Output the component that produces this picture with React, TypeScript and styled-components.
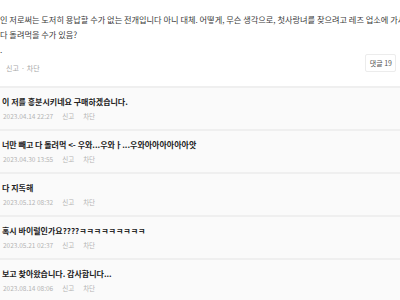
import React from "react";
import styled, { createGlobalStyle } from "styled-components";

const Global = createGlobalStyle`
  html, body { margin: 0; padding: 0; background: #ffffff; }
  body { width: 400px; height: 300px; overflow: hidden; font-family: "Noto Sans CJK KR", "Noto Sans", sans-serif; }
`;

const Page = styled.div`
  width: 400px;
  height: 300px;
  overflow: hidden;
  display: flex;
  flex-direction: column;
`;

const Post = styled.section`
  background: #ffffff;
  padding: 12px 4px 0 0;
  height: 88px;
  flex: none;
  box-sizing: border-box;
  display: flex;
  flex-direction: column;
  border-bottom: 2px solid #efefef;
`;

const PostText = styled.p`
  margin: 0;
  font-size: 8.2px;
  line-height: 15px;
  color: #3a3a3a;
  white-space: nowrap;
`;

const PostFooter = styled.div`
  display: flex;
  justify-content: space-between;
  align-items: flex-start;
  padding-left: 6px;
  margin-top: -3px;
`;

const Actions = styled.div`
  display: flex;
  align-items: center;
  gap: 2px;
  margin-top: 8px;
  font-size: 7px;
  color: #a8a8a8;
  line-height: 12px;
`;

const ReplyButton = styled.button`
  font-family: inherit;
  font-size: 7px;
  color: #555;
  background: #fff;
  border: 1px solid #ececec;
  border-radius: 2px;
  height: 18px;
  padding: 0 3px 0 4px;
`;

const Comment = styled.div`
  background: #fafafa;
  height: 43px;
  flex: none;
  border-bottom: 2px solid #efefef;
  padding: 8px 0 0 2px;
  box-sizing: border-box;
  display: flex;
  flex-direction: column;
  gap: 3px;
`;

const CommentText = styled.div`
  font-size: 8px;
  font-weight: 700;
  line-height: 12px;
  color: #222;
  white-space: nowrap;
`;

const Meta = styled.div`
  display: flex;
  align-items: center;
  font-size: 6.5px;
  line-height: 10px;
  color: #b4b4b4;
  padding-left: 1px;
`;

const MetaItem = styled.span<{ $gap?: number }>`
  margin-left: ${(p) => p.$gap ?? 0}px;
`;

const comments = [
  { text: "이 저를 흥분시키네요 구매하겠습니다.", date: "2023.04.14 22:27" },
  { text: "너만 빼고 다 돌려먹 <- 우와...우와ㅏ...우와아아아아아아앗", date: "2023.04.30 13:55" },
  { text: "다 지독해", date: "2023.05.12 08:32" },
  { text: "혹시 바이럴인가요????ㅋㅋㅋㅋㅋㅋㅋㅋㅋ", date: "2023.05.21 02:37" },
  { text: "보고 찾아왔습니다. 감사합니다...", date: "2023.08.14 08:06" },
];

export default function App() {
  return (
    <Page>
      <Global />
      <Post>
        <PostText>인 저로써는 도저히 용납할 수가 없는 전개입니다 아니 대체. 어떻게, 무슨 생각으로, 첫사랑녀를 찾으려고 레즈 업소에 가서</PostText>
        <PostText>다 돌려먹을 수가 있음?</PostText>
        <PostText>.</PostText>
        <PostFooter>
          <Actions>
            <span>신고</span>
            <span>·</span>
            <span>차단</span>
          </Actions>
          <ReplyButton>댓글 19</ReplyButton>
        </PostFooter>
      </Post>
      {comments.map((c) => (
        <Comment key={c.date}>
          <CommentText>{c.text}</CommentText>
          <Meta>
            <span>{c.date}</span>
            <MetaItem $gap={9}>신고</MetaItem>
            <MetaItem $gap={9}>차단</MetaItem>
          </Meta>
        </Comment>
      ))}
    </Page>
  );
}
